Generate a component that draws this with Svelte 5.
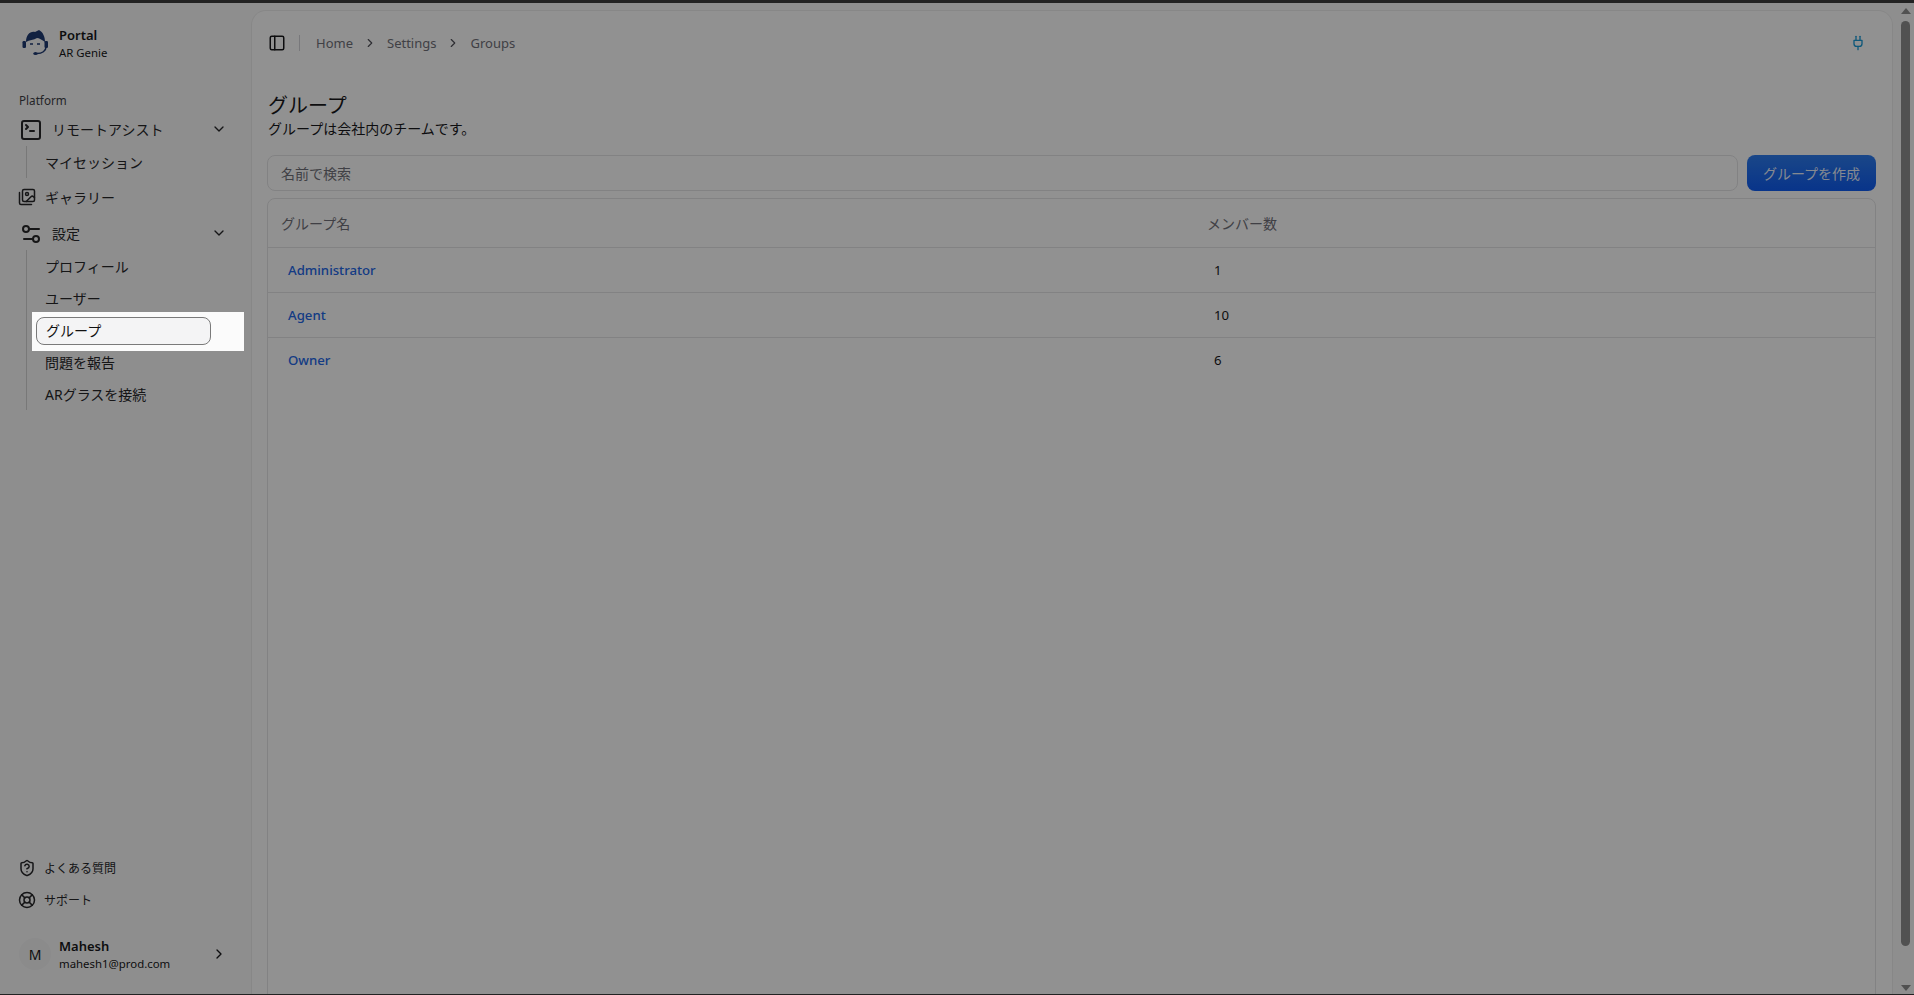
<script>
  const remote = ['マイセッション'];
  const settings = ['プロフィール', 'ユーザー', 'グループ', '問題を報告', 'ARグラスを接続'];
  const groups = [
    { name: 'Administrator', count: 1 },
    { name: 'Agent', count: 10 },
    { name: 'Owner', count: 6 }
  ];
  const active = 'グループ';
</script>

<div class="page">
  <div class="topline"></div>
  <div class="shell">
    <aside class="sidebar">
      <div class="brand">
        <svg class="logo" viewBox="0 0 28 28" width="28" height="28">
          <path d="M5 13C5 6 9 2 14 3L18 1C22 3 24 8 24 13C21 11 18 9 16 9C13 11 8 11 5 13Z" fill="#1f3a73" />
          <rect x="1.5" y="12" width="3.5" height="7" rx="1.2" fill="#1f3a73" />
          <rect x="23.5" y="12" width="3.5" height="7" rx="1.2" fill="#1f3a73" />
          <path d="M25 18C25 22 21 24.5 16 24.5" fill="none" stroke="#1f3a73" stroke-width="1.5" />
          <ellipse cx="14.5" cy="24.5" rx="2.2" ry="1.6" fill="#1f3a73" />
          <path d="M9 15h3M16 15h3" stroke="#1f3a73" stroke-width="1.4" />
        </svg>
        <div class="brand-text">
          <strong>Portal</strong>
          <span>AR Genie</span>
        </div>
      </div>

      <div class="group-label">Platform</div>

      <div class="menu-row">
        <svg class="ico big" viewBox="0 0 24 24"><path d="m7 11 2-2-2-2" /><path d="M11 13h4" /><rect width="18" height="18" x="3" y="3" rx="2" /></svg>
        <span class="wide">リモートアシスト</span>
        <svg class="ico chev" viewBox="0 0 24 24"><path d="m6 9 6 6 6-6" /></svg>
      </div>
      <ul class="sub">
        {#each remote as item}
          <li><span>{item}</span></li>
        {/each}
      </ul>

      <div class="menu-row single">
        <svg class="ico mid" viewBox="0 0 24 24"><path d="M18 22H4a2 2 0 0 1-2-2V6" /><path d="m22 13-1.296-1.296a2.41 2.41 0 0 0-3.408 0L11 18" /><circle cx="12" cy="8" r="2" /><rect width="16" height="16" x="6" y="2" rx="2" /></svg>
        <span>ギャラリー</span>
      </div>

      <div class="menu-row settings">
        <svg class="ico big" viewBox="0 0 24 24"><path d="M20 7h-9" /><path d="M14 17H5" /><circle cx="17" cy="17" r="3" /><circle cx="7" cy="7" r="3" /></svg>
        <span class="wide">設定</span>
        <svg class="ico chev" viewBox="0 0 24 24"><path d="m6 9 6 6 6-6" /></svg>
      </div>
      <ul class="sub">
        {#each settings as item}
          <li class:current={item === active}>
            {#if item === active}<div class="spot"></div>{/if}
            <span>{item}</span>
          </li>
        {/each}
      </ul>

      <div class="foot">
        <div class="foot-row">
          <svg class="ico small" viewBox="0 0 24 24"><path d="M20 13c0 5-3.5 7.5-7.66 8.95a1 1 0 0 1-.67-.01C7.5 20.5 4 18 4 13V6a1 1 0 0 1 1-1c2 0 4.5-1.2 6.24-2.72a1.17 1.17 0 0 1 1.52 0C14.51 3.81 17 5 19 5a1 1 0 0 1 1 1z" /><path d="M9.1 9a3 3 0 0 1 5.82 1c0 2-3 3-3 3" /><path d="M12 17h.01" /></svg>
          <span>よくある質問</span>
        </div>
        <div class="foot-row">
          <svg class="ico small" viewBox="0 0 24 24"><circle cx="12" cy="12" r="10" /><path d="m4.93 4.93 4.24 4.24" /><path d="m14.83 9.17 4.24-4.24" /><path d="m14.83 14.83 4.24 4.24" /><path d="m9.17 14.83-4.24 4.24" /><circle cx="12" cy="12" r="4" /></svg>
          <span>サポート</span>
        </div>
        <div class="user">
          <div class="avatar">M</div>
          <div class="user-text">
            <strong>Mahesh</strong>
            <span>mahesh1@prod.com</span>
          </div>
          <svg class="ico chev" viewBox="0 0 24 24"><path d="m9 18 6-6-6-6" /></svg>
        </div>
      </div>
    </aside>

    <main class="main">
      <header class="crumbs">
        <svg class="ico panel" viewBox="0 0 24 24"><rect width="18" height="18" x="3" y="3" rx="2" /><path d="M9 3v18" /></svg>
        <div class="sep"></div>
        <span>Home</span>
        <svg class="ico crumb-chev" viewBox="0 0 24 24"><path d="m9 18 6-6-6-6" /></svg>
        <span>Settings</span>
        <svg class="ico crumb-chev" viewBox="0 0 24 24"><path d="m9 18 6-6-6-6" /></svg>
        <span>Groups</span>
        <svg class="ico plug" viewBox="0 0 24 24"><path d="M12 22v-5" /><path d="M9 8V2" /><path d="M15 8V2" /><path d="M18 8v5a4 4 0 0 1-4 4h-4a4 4 0 0 1-4-4V8Z" /></svg>
      </header>

      <section class="content">
        <h1>グループ</h1>
        <p>グループは会社内のチームです。</p>

        <div class="tools">
          <input class="search" placeholder="名前で検索" />
          <button class="create">グループを作成</button>
        </div>

        <div class="card">
          <table>
            <colgroup><col class="col-name" /><col /></colgroup>
            <thead>
              <tr><th>グループ名</th><th>メンバー数</th></tr>
            </thead>
            <tbody>
              {#each groups as g}
                <tr>
                  <td><a href="#top">{g.name}</a></td>
                  <td>{g.count}</td>
                </tr>
              {/each}
            </tbody>
          </table>
        </div>
      </section>
    </main>

    <div class="scrollbar">
      <div class="arrow up"></div>
      <div class="thumb"></div>
      <div class="arrow down"></div>
    </div>
  </div>
  <div class="bottomline"></div>
</div>

<style>
  :global(body) {
    margin: 0;
    background: #fafafa;
  }

  .page {
    height: 995px;
    overflow: hidden;
    display: flex;
    flex-direction: column;
    background: #fafafa;
    color: #18181b;
    font-family: "Noto Sans", "Noto Sans CJK JP", sans-serif;
    font-size: 14px;
  }

  .topline {
    height: 3px;
    flex: none;
    background: #3c3c3c;
  }

  .bottomline {
    height: 1px;
    flex: none;
    background: #3c3c3c;
  }

  .shell {
    flex: 1;
    min-height: 0;
    display: flex;
  }

  .ico {
    fill: none;
    stroke: currentColor;
    stroke-width: 2;
    stroke-linecap: round;
    stroke-linejoin: round;
    flex: none;
  }

  /* sidebar */
  .sidebar {
    width: 252px;
    flex: none;
    display: flex;
    flex-direction: column;
    box-sizing: border-box;
    padding: 24px 0 0;
  }

  .brand {
    display: flex;
    align-items: center;
    gap: 10px;
    padding-left: 21px;
    height: 32px;
  }

  .brand-text,
  .user-text {
    display: flex;
    flex-direction: column;
    line-height: 18px;
  }

  .brand-text strong,
  .user-text strong {
    font-weight: 600;
    font-size: 13px;
  }

  .brand-text span,
  .user-text span {
    font-size: 11.4px;
    line-height: 17px;
  }

  .group-label {
    margin: 31px 0 0 19px;
    height: 20px;
    line-height: 20px;
    font-size: 11.7px;
    color: #3f3f46;
  }

  .menu-row {
    height: 32px;
    margin-top: 3px;
    display: flex;
    align-items: center;
    padding-left: 19px;
    color: #27272a;
  }

  .menu-row .wide {
    flex: 1;
    margin-left: 9px;
  }

  .menu-row.single {
    margin-top: 3px;
    padding-left: 18px;
    gap: 9px;
  }

  .menu-row.settings {
    margin-top: 4px;
  }

  .big {
    width: 24px;
    height: 24px;
    margin-top: 2px;
  }

  .mid {
    width: 18px;
    height: 18px;
  }

  .small {
    width: 18px;
    height: 18px;
  }

  .chev {
    width: 16px;
    height: 16px;
    margin-right: 25px;
  }

  .sub {
    list-style: none;
    margin: 1px 0 0 26px;
    padding: 0 0 0 10px;
    border-left: 1px solid #d4d4d4;
    width: 202px;
    box-sizing: content-box;
  }

  .sub li {
    height: 32px;
    display: flex;
    align-items: center;
    padding-left: 8px;
    position: relative;
    color: #27272a;
  }

  /* tour highlight: its shadow is the dim layer over the whole page */
  .spot {
    position: absolute;
    left: -5px;
    right: -5px;
    top: -2px;
    height: 39px;
    background: #fbfbfb;
    box-shadow: 0 0 0 3000px rgba(0, 0, 0, 0.43);
    z-index: 5;
  }

  .sub li.current span {
    position: absolute;
    left: -1px;
    top: 3px;
    width: 175px;
    height: 28px;
    box-sizing: border-box;
    padding-left: 9px;
    line-height: 26px;
    border: 1px solid #7a7a7a;
    border-radius: 8px;
    background: #f4f4f5;
    color: #111;
    z-index: 6;
  }

  .foot {
    margin-top: auto;
    padding-bottom: 20px;
  }

  .foot-row {
    height: 32px;
    display: flex;
    align-items: center;
    gap: 8px;
    padding-left: 18px;
    font-size: 12px;
    color: #27272a;
  }

  .user {
    margin-top: 18px;
    height: 40px;
    display: flex;
    align-items: center;
    padding-left: 19px;
  }

  .avatar {
    width: 32px;
    height: 32px;
    border-radius: 50%;
    background: #f4f4f5;
    display: flex;
    align-items: center;
    justify-content: center;
    margin-right: 8px;
    font-size: 14px;
  }

  .user-text {
    flex: 1;
  }

  /* main panel */
  .main {
    width: 1640px;
    flex: none;
    margin-top: 8px;
    background: #fff;
    border-radius: 14px 14px 0 0;
    box-shadow: 0 0 0 1px rgba(0, 0, 0, 0.05);
    overflow: hidden;
    display: flex;
    flex-direction: column;
  }

  .crumbs {
    height: 48px;
    margin-top: 8px;
    flex: none;
    display: flex;
    align-items: center;
    padding-left: 16px;
    padding-right: 26px;
    color: #71717a;
    font-size: 13px;
  }

  .panel {
    width: 18px;
    height: 18px;
    color: #18181b;
    stroke-width: 2;
  }

  .sep {
    width: 1px;
    height: 16px;
    background: #d4d4d8;
    margin: 0 16px 0 13px;
  }

  .crumb-chev {
    width: 14px;
    height: 14px;
    margin: 0 10px;
    color: #52525b;
  }

  .plug {
    width: 16px;
    height: 16px;
    margin-left: auto;
    color: #1a9bd7;
  }

  .content {
    padding: 25px 16px 0 15px;
    flex: 1;
  }

  h1 {
    margin: 0;
    padding-left: 1px;
    font-size: 20px;
    font-weight: 400;
    line-height: 27px;
  }

  p {
    margin: 0;
    padding-left: 1px;
    line-height: 20px;
    font-size: 14px;
  }

  .tools {
    margin-top: 16px;
    display: flex;
    gap: 9px;
  }

  .search {
    flex: 1;
    height: 36px;
    box-sizing: border-box;
    border: 1px solid #e4e4e7;
    border-radius: 8px;
    padding: 0 13px;
    background: transparent;
    font: inherit;
    outline: none;
  }

  .search::placeholder {
    color: #71717a;
  }

  .create {
    width: 129px;
    height: 36px;
    border: 0;
    border-radius: 8px;
    background: linear-gradient(#2e7df0, #0f5cf2);
    color: rgba(255, 255, 255, 0.92);
    font: inherit;
  }

  .card {
    margin-top: 7px;
    min-height: 900px;
    border: 1px solid #e4e4e7;
    border-radius: 8px;
  }

  table {
    width: 100%;
    table-layout: fixed;
    border-collapse: collapse;
  }

  .col-name {
    width: 926px;
  }

  th {
    height: 48px;
    padding: 0 0 0 13px;
    text-align: left;
    font-weight: 400;
    color: #71717a;
    border-bottom: 1px solid #e4e4e7;
  }

  td {
    height: 44px;
    padding: 0 0 0 20px;
    border-bottom: 1px solid #e4e4e7;
    font-size: 13.2px;
  }

  tbody tr:last-child td {
    border-bottom: 0;
  }

  td a {
    color: #2468e8;
    font-weight: 500;
    text-decoration: none;
  }

  /* scrollbar column */
  .scrollbar {
    margin-left: 5px;
    width: 17px;
    flex: none;
    display: flex;
    flex-direction: column;
    align-items: center;
    padding: 5px 0 3px;
    box-sizing: border-box;
  }

  .thumb {
    width: 9px;
    flex: 1;
    margin: 7px 0 39px;
    border-radius: 5px;
    background: #8f8f8f;
  }

  .arrow {
    width: 0;
    height: 0;
    border-left: 5px solid transparent;
    border-right: 5px solid transparent;
  }

  .arrow.up {
    border-bottom: 6px solid #8f8f8f;
  }

  .arrow.down {
    border-top: 6px solid #8f8f8f;
  }
</style>
